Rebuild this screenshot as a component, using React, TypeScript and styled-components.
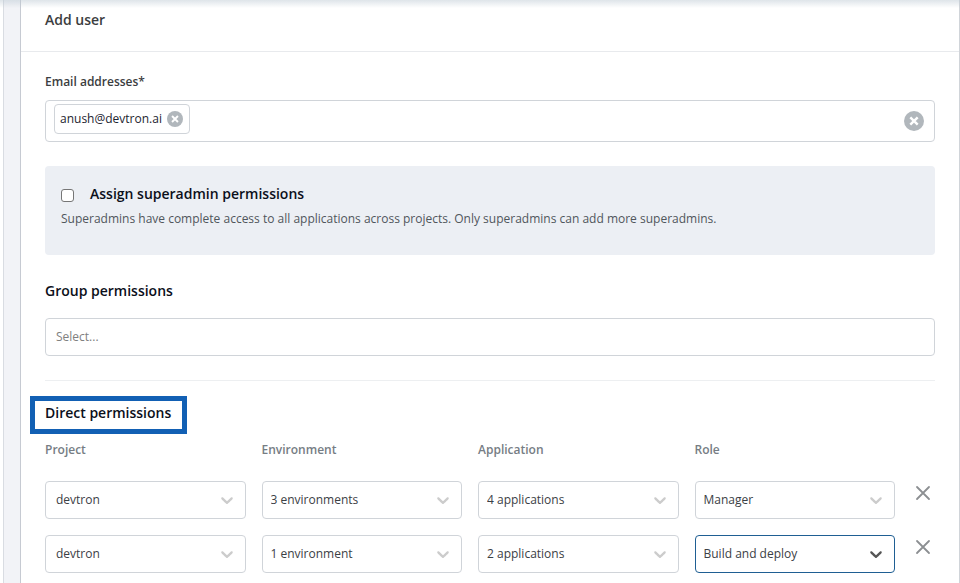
import React, { useState } from "react";
import styled, { createGlobalStyle } from "styled-components";

const GlobalStyle = createGlobalStyle`
  *, *::before, *::after { box-sizing: border-box; }
  html { height: 100%; overflow: hidden; }
  body {
    margin: 0;
    min-height: 100%;
    background: #ffffff;
    font-family: "Open Sans", "Noto Sans", sans-serif;
    font-size: 12px;
    line-height: 20px;
    color: #3b4045;
  }
  button, input, select { font: inherit; color: inherit; margin: 0; }
  h1, h2, p { margin: 0; }
`;

const Page = styled.div`
  display: flex;
  min-height: 100vh;
  padding-left: 3px;
`;

const Gutter = styled.div`
  flex: none;
  width: 17px;
  background: #f2f3f7;
  border-left: 1px solid #d9dce2;
`;

const Panel = styled.main`
  flex: 1;
  min-width: 0;
  border-left: 1px solid #c6cad2;
  border-right: 1px solid #d0d4d9;
`;

const TopShade = styled.div`
  position: fixed;
  inset: 0 0 auto 0;
  height: 8px;
  background: linear-gradient(rgba(190, 202, 212, 0.5), rgba(225, 232, 238, 0));
  pointer-events: none;
`;

const Header = styled.header`
  padding: 10px 24px 21px;
  border-bottom: 1px solid #e8eaed;
`;

const Title = styled.h1`
  font-size: 14px;
  line-height: 20px;
  font-weight: 600;
  color: #3b3d40;
`;

const Form = styled.form`
  padding: 20px 24px 10px;
`;

const FieldLabel = styled.label`
  display: block;
  margin-bottom: 8px;
  font-weight: 600;
  color: #3b3d40;
`;

const EmailBox = styled.div`
  display: flex;
  align-items: center;
  height: 42px;
  padding: 0 10px 0 8px;
  border: 1px solid #d0d4d9;
  border-radius: 4px;
`;

const Chip = styled.span`
  display: flex;
  align-items: center;
  gap: 5px;
  height: 30px;
  margin-bottom: 4px;
  padding: 0 6px 0 5px;
  border: 1px solid #d0d4d9;
  border-radius: 4px;
  color: #1d2430;
`;

const EmailInput = styled.input`
  flex: 1;
  min-width: 0;
  padding: 0 8px;
  border: 0;
  outline: 0;
  background: none;
`;

const IconButton = styled.button`
  display: flex;
  flex: none;
  padding: 0;
  border: 0;
  background: none;
  cursor: pointer;
`;

const SuperAdmin = styled.section`
  margin-top: 24px;
  padding: 18px 16px 26px;
  border-radius: 4px;
  background: #eceff4;
`;

const SuperAdminLabel = styled.label`
  display: flex;
  align-items: center;
  gap: 16px;
  margin-bottom: 5px;
  font-size: 14px;
  font-weight: 600;
  color: #0b0f1a;
`;

const Checkbox = styled.input`
  && { margin-top: 2px; }
  appearance: none;
  width: 13px;
  height: 13px;
  border: 1px solid #767676;
  border-radius: 3px;
  background: #ffffff;
  &:checked { background: #0b62b8; }
`;

const Hint = styled.p`
  color: #50565c;
`;

const SectionTitle = styled.h2`
  font-size: 14px;
  line-height: 20px;
  font-weight: 600;
  color: #0b0f1a;
`;

const GroupSection = styled.section`
  margin-top: 26px;
  padding-bottom: 24px;
  border-bottom: 1px solid #edeff1;
`;

const GroupInput = styled.input`
  display: block;
  width: 100%;
  height: 38px;
  margin-top: 17px;
  padding: 0 10px 2px;
  border: 1px solid #d0d4d9;
  border-radius: 4px;
  &::placeholder { color: #808080; opacity: 1; }
`;

const DirectSection = styled.section`
  margin-top: 15px;
`;

const Highlight = styled.div`
  width: fit-content;
  margin-left: -15px;
  padding: 2px 11px 6px 10px;
  border: 5px solid #1260b4;
`;

const PermissionGrid = styled.div`
  display: grid;
  grid-template-columns: repeat(4, minmax(0, 1fr)) 24px;
  gap: 16px;
  margin-top: 6px;
`;

const ColumnHead = styled.span`
  padding-bottom: 5px;
  font-weight: 600;
  color: #767d84;
`;

const SelectShell = styled.div<{ $active: boolean }>`
  display: grid;
  grid-template-columns: minmax(0, 1fr) 36px;
  align-items: center;
  height: 38px;
  border: 1px solid ${(p) => (p.$active ? "#1f5f93" : "#d0d4d9")};
  border-radius: 4px;
  color: ${(p) => (p.$active ? "#555555" : "#cccccc")};
`;

const Select = styled.select<{ $inset: number }>`
  grid-area: 1 / 1 / 2 / 3;
  appearance: none;
  width: 100%;
  height: 36px;
  padding: 0 36px 0 ${(p) => p.$inset}px;
  border: 0;
  outline: 0;
  background: none;
  color: #3b4045;
`;

const ChevronIcon = styled.svg`
  grid-area: 1 / 2;
  justify-self: center;
  pointer-events: none;
`;

const RemoveButton = styled(IconButton)`
  && { color: #8c8f92; }
  align-self: start;
`;

const Chevron = () => (
  <ChevronIcon width="20" height="20" viewBox="0 0 20 20" fill="currentColor" aria-hidden="true">
    <path d="M4.516 7.548c0.436-0.446 1.043-0.481 1.576 0l3.908 3.747 3.908-3.747c0.533-0.481 1.141-0.446 1.574 0 0.436 0.445 0.408 1.197 0 1.615-0.406 0.418-4.695 4.502-4.695 4.502-0.217 0.223-0.502 0.335-0.787 0.335s-0.57-0.112-0.789-0.335c0 0-4.287-4.084-4.695-4.502s-0.436-1.17 0-1.615z" />
  </ChevronIcon>
);

const ClearIcon = ({ size }: { size: number }) => (
  <svg width={size} height={size} viewBox="0 0 20 20" aria-hidden="true">
    <circle cx="10" cy="10" r="10" fill="#b1b7bc" />
    <path d="M6.3 6.3l7.4 7.4M13.7 6.3l-7.4 7.4" stroke="#ffffff" strokeWidth="2.4" />
  </svg>
);

const CrossIcon = () => (
  <svg width="24" height="24" viewBox="0 0 24 24" aria-hidden="true">
    <path d="M6 6l12 12M18 6L6 18" stroke="currentColor" strokeWidth="1.8" strokeLinecap="round" />
  </svg>
);

const columns = ["Project", "Environment", "Application", "Role"];

const permissions = [
  ["devtron", "3 environments", "4 applications", "Manager"],
  ["devtron", "1 environment", "2 applications", "Build and deploy"],
];

export default function App() {
  const [superAdmin, setSuperAdmin] = useState(false);

  return (
    <>
      <GlobalStyle />
      <Page>
        <Gutter />
        <Panel>
          <Header>
            <Title>Add user</Title>
          </Header>
          <Form onSubmit={(e) => e.preventDefault()}>
            <FieldLabel htmlFor="emails">Email addresses*</FieldLabel>
            <EmailBox>
              <Chip>
                anush@devtron.ai
                <IconButton type="button" aria-label="Remove anush@devtron.ai">
                  <ClearIcon size={16} />
                </IconButton>
              </Chip>
              <EmailInput id="emails" type="text" />
              <IconButton type="button" aria-label="Clear all emails">
                <ClearIcon size={20} />
              </IconButton>
            </EmailBox>

            <SuperAdmin>
              <SuperAdminLabel>
                <Checkbox
                  type="checkbox"
                  checked={superAdmin}
                  onChange={(e) => setSuperAdmin(e.target.checked)}
                />
                Assign superadmin permissions
              </SuperAdminLabel>
              <Hint>
                Superadmins have complete access to all applications across projects. Only
                superadmins can add more superadmins.
              </Hint>
            </SuperAdmin>

            <GroupSection>
              <SectionTitle id="groups">Group permissions</SectionTitle>
              <GroupInput type="text" aria-labelledby="groups" placeholder="Select..." />
            </GroupSection>

            <DirectSection>
              <Highlight>
                <SectionTitle>Direct permissions</SectionTitle>
              </Highlight>
              <PermissionGrid>
                {columns.map((name) => (
                  <ColumnHead key={name}>{name}</ColumnHead>
                ))}
                <span />
                {permissions.map((row, r) => (
                  <React.Fragment key={r}>
                    {row.map((value, c) => (
                      <SelectShell key={columns[c]} $active={r === 1 && c === 3}>
                        <Select $inset={c === 0 ? 10 : 8} aria-label={columns[c]} defaultValue={value}>
                          <option>{value}</option>
                        </Select>
                        <Chevron />
                      </SelectShell>
                    ))}
                    <RemoveButton type="button" aria-label="Remove permission">
                      <CrossIcon />
                    </RemoveButton>
                  </React.Fragment>
                ))}
              </PermissionGrid>
            </DirectSection>
          </Form>
        </Panel>
        <TopShade />
      </Page>
    </>
  );
}
